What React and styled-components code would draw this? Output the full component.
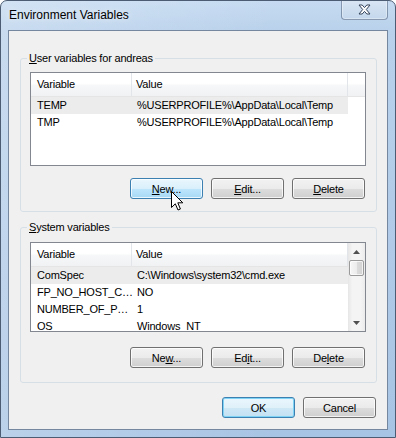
import React from "react";
import styled, { createGlobalStyle } from "styled-components";

const GlobalStyle = createGlobalStyle`
  html, body {
    margin: 0;
    padding: 0;
    background: #ffffff;
  }
  body {
    font-family: "Liberation Sans", Arial, sans-serif;
    font-size: 11px;
    letter-spacing: -0.2px;
    color: #000;
  }
`;

const Window = styled.div`
  position: relative;
  width: 396px;
  height: 438px;
  box-sizing: border-box;
  border: 1px solid #4b5c73;
  border-radius: 7px 7px 0 0;
  background:
    linear-gradient(to right, rgba(255, 255, 255, 0.22), rgba(255, 255, 255, 0) 70%),
    linear-gradient(to bottom, #c6dbf1 0px, #b9d1eb 30px, #a8c4e4 100%);
  display: flex;
  flex-direction: column;
  overflow: hidden;
`;

const TitleBar = styled.div`
  height: 29px;
  display: flex;
  align-items: flex-start;
  justify-content: space-between;
`;

const Title = styled.div`
  padding-left: 8px;
  line-height: 29px;
  font-size: 12px;
  letter-spacing: 0;
  text-shadow: 0 0 6px rgba(255, 255, 255, 0.9);
`;

const CloseButton = styled.div`
  width: 47px;
  height: 20px;
  box-sizing: border-box;
  margin: -1px 7px 0 0;
  border: 1px solid rgba(70, 90, 120, 0.55);
  border-top: none;
  border-radius: 0 0 4px 4px;
  background: linear-gradient(to bottom, #d9e6f4, #c4d7ec);
  box-shadow: inset 0 0 0 1px rgba(255, 255, 255, 0.35);
  display: flex;
  align-items: center;
  justify-content: center;
`;

const Client = styled.div`
  flex: 1;
  margin: 0 7px 7px 7px;
  border: 1px solid #75879f;
  background: #f0f0f0;
  padding: 20px 10px 0 11px;
  display: flex;
  flex-direction: column;
`;

const Group = styled.fieldset`
  margin: ${(p) => p.top || 0}px 0 0 0;
  padding: ${(p) => p.padTop}px 10px ${(p) => p.padBottom}px 9px;
  border: 1px solid #d5dfe5;
  border-radius: 3px;
  min-width: 0;
`;

const Legend = styled.legend`
  padding: 0 2px;
  margin-left: -3px;
  line-height: 14px;
  font-size: 11px;
`;

const Key = styled.span`
  text-decoration: underline;
`;

const ListBox = styled.div`
  width: 336px;
  height: ${(p) => p.height}px;
  box-sizing: border-box;
  border: 1px solid #828790;
  background: #ffffff;
  display: flex;
  overflow: hidden;
`;

const ListMain = styled.div`
  flex: 1;
  display: flex;
  flex-direction: column;
`;

const Header = styled.div`
  display: flex;
  height: 24px;
  box-sizing: border-box;
  border-bottom: 1px solid #e5e5e5;
  background: linear-gradient(to bottom, #ffffff 0%, #ffffff 45%, #f6f7f8 55%, #f1f2f3 100%);
`;

const HeadCell = styled.div`
  width: ${(p) => (p.w ? `${p.w}px` : "auto")};
  flex: ${(p) => (p.w ? "none" : "1")};
  box-sizing: border-box;
  padding-left: ${(p) => p.pad || 0}px;
  border-right: ${(p) => (p.w ? "1px solid #e2e5e9" : "none")};
  line-height: 23px;
`;

const Row = styled.div`
  display: flex;
  width: 317px;
  height: 17px;
  line-height: 17px;
  background: ${(p) => (p.selected ? "#ececec" : "transparent")};
  white-space: nowrap;
`;

const Cell = styled.div`
  width: ${(p) => p.w}px;
  flex: none;
  box-sizing: border-box;
  padding-left: ${(p) => p.pad}px;
`;

const ScrollBar = styled.div`
  width: 17px;
  display: flex;
  flex-direction: column;
  background: linear-gradient(to right, #e6e6e6, #f4f4f4 25%, #f4f4f4 75%, #ebebeb);
`;

const ScrollArrow = styled.div`
  height: 17px;
  display: flex;
  align-items: center;
  justify-content: center;
`;

const ScrollThumb = styled.div`
  height: 16px;
  margin: 0 1px;
  box-sizing: border-box;
  border: 1px solid #9a9a9a;
  border-radius: 2px;
  background: linear-gradient(to right, #f7f7f7, #ececec 50%, #dcdcdc 50%, #d2d2d2);
  box-shadow: inset 0 0 0 1px rgba(255, 255, 255, 0.7);
`;

const ScrollTrack = styled.div`
  flex: 1;
`;

const ButtonRow = styled.div`
  display: flex;
  justify-content: flex-end;
  gap: 8px;
  margin-top: ${(p) => p.top}px;
  padding-right: 1px;
`;

const Button = styled.div`
  width: 73px;
  height: 21px;
  box-sizing: border-box;
  border: 1px solid ${(p) => (p.hover || p.primary ? "#3c7fb1" : "#707070")};
  border-radius: 3px;
  background: ${(p) =>
    p.hover
      ? "linear-gradient(to bottom, #eaf6fd 0%, #d9f0fc 50%, #bee6fd 50%, #a7d9f5 100%)"
      : p.primary
      ? "linear-gradient(to bottom, #eaf6fd 0%, #e0f1fa 50%, #cfe8f6 50%, #c3e1f3 100%)"
      : "linear-gradient(to bottom, #f2f2f2 0%, #ebebeb 50%, #dddddd 50%, #cfcfcf 100%)"};
  box-shadow: inset 0 0 0 1px ${(p) => (p.primary ? "#7fd3f4" : "rgba(255, 255, 255, 0.75)")};
  display: flex;
  align-items: center;
  justify-content: center;
  font-size: 11px;
`;

const DialogButtons = styled.div`
  display: flex;
  justify-content: flex-end;
  gap: 8px;
  margin: 14px 1px 0 0;
`;

const Cursor = styled.svg`
  position: absolute;
  left: 170px;
  top: 190px;
`;

const userVars = [
  { name: "TEMP", value: "%USERPROFILE%\\AppData\\Local\\Temp", selected: true },
  { name: "TMP", value: "%USERPROFILE%\\AppData\\Local\\Temp" },
];

const systemVars = [
  { name: "ComSpec", value: "C:\\Windows\\system32\\cmd.exe", selected: true },
  { name: "FP_NO_HOST_C…", value: "NO" },
  { name: "NUMBER_OF_P…", value: "1" },
  { name: "OS", value: "Windows_NT" },
];

function VarList({ rows, height, scroll }) {
  return (
    <ListBox height={height}>
      <ListMain>
        <Header>
          <HeadCell w={101} pad={6}>Variable</HeadCell>
          <HeadCell w={216} pad={4}>Value</HeadCell>
          <HeadCell />
        </Header>
        {rows.map((r) => (
          <Row key={r.name} selected={r.selected}>
            <Cell w={101} pad={6}>{r.name}</Cell>
            <Cell w={216} pad={5}>{r.value}</Cell>
          </Row>
        ))}
      </ListMain>
      {scroll && (
        <ScrollBar>
          <ScrollArrow>
            <svg width="7" height="4" viewBox="0 0 7 4">
              <path d="M0 4 L3.5 0 L7 4 Z" fill="#505050" />
            </svg>
          </ScrollArrow>
          <ScrollThumb />
          <ScrollTrack />
          <ScrollArrow>
            <svg width="7" height="4" viewBox="0 0 7 4">
              <path d="M0 0 L3.5 4 L7 0 Z" fill="#505050" />
            </svg>
          </ScrollArrow>
        </ScrollBar>
      )}
    </ListBox>
  );
}

export default function App() {
  return (
    <>
      <GlobalStyle />
      <Window>
        <TitleBar>
          <Title>Environment Variables</Title>
          <CloseButton>
            <svg width="13" height="11" viewBox="0 0 13 11">
              <polygon
                points="1,1 4.2,1 6.5,3.6 8.8,1 12,1 8.3,5.5 12,10 8.8,10 6.5,7.4 4.2,10 1,10 4.7,5.5"
                fill="#ffffff"
                stroke="#34435a"
                strokeWidth="1"
                strokeLinejoin="round"
              />
            </svg>
          </CloseButton>
        </TitleBar>
        <Client>
          <Group padTop={7} padBottom={12}>
            <Legend>
              <Key>U</Key>ser variables for andreas
            </Legend>
            <VarList rows={userVars} height={94} />
            <ButtonRow top={12}>
              <Button hover>
                <span><Key>N</Key>ew...</span>
              </Button>
              <Button>
                <span><Key>E</Key>dit...</span>
              </Button>
              <Button>
                <span><Key>D</Key>elete</span>
              </Button>
            </ButtonRow>
          </Group>
          <Group top={8} padTop={8} padBottom={14}>
            <Legend>
              <Key>S</Key>ystem variables
            </Legend>
            <VarList rows={systemVars} height={90} scroll />
            <ButtonRow top={15}>
              <Button>
                <span>Ne<Key>w</Key>...</span>
              </Button>
              <Button>
                <span>Ed<Key>i</Key>t...</span>
              </Button>
              <Button>
                <span>De<Key>l</Key>ete</span>
              </Button>
            </ButtonRow>
          </Group>
          <DialogButtons>
            <Button primary>OK</Button>
            <Button>Cancel</Button>
          </DialogButtons>
        </Client>
        <Cursor width="13" height="21" viewBox="0 0 13 21">
          <path
            d="M0.5 0.5 V16.5 L4.3 12.8 L7 19 L9.4 18 L6.8 11.8 H11.8 Z"
            fill="#ffffff"
            stroke="#000000"
            strokeWidth="1"
            strokeLinejoin="miter"
          />
        </Cursor>
      </Window>
    </>
  );
}
